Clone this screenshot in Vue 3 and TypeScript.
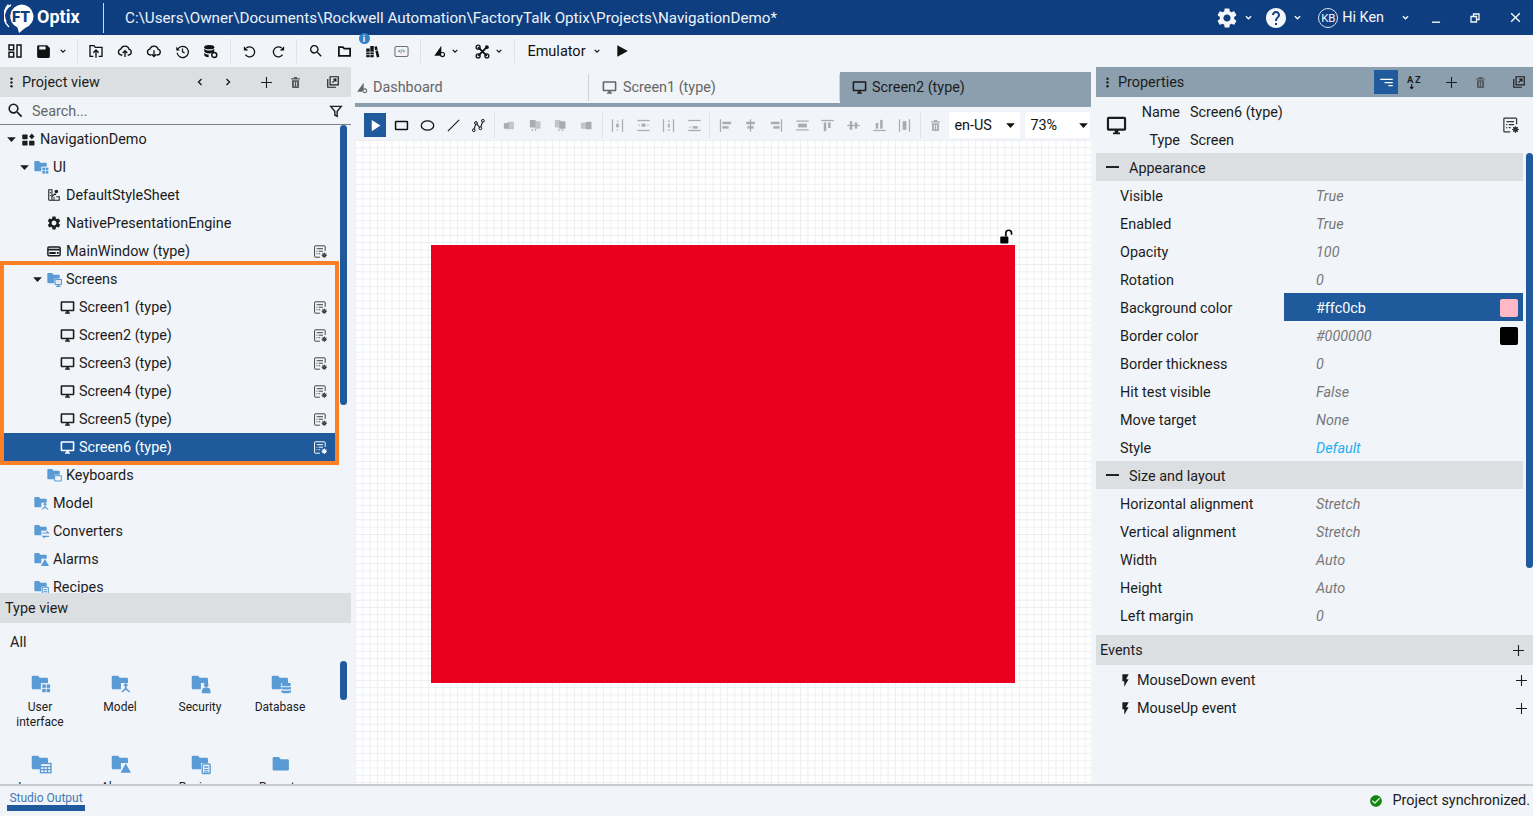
<script setup lang="ts">
import { h } from 'vue'

const folderD = 'M2 4.5C2 3.7 2.7 3 3.5 3H9l2.2 2.5H19c.9 0 1.6.7 1.6 1.6V17c0 .8-.7 1.5-1.6 1.5H3.5C2.7 18.5 2 17.8 2 17z'
const folderWith = (o: string) =>
  `<path fill="#5b9bd5" d="${folderD}"/><rect x="12.5" y="11.5" width="12" height="12.5" fill="#f1f4f8"/>${o}`
const B = '#5b9bd5'
const G = '#a9adb1'
const gl = (inner: string) => `<g fill="${G}" stroke="none">${inner}</g>`

const icons: Record<string, string> = {
  gear: '<path fill="currentColor" d="M19.14 12.94c.04-.3.06-.61.06-.94 0-.32-.02-.64-.07-.94l2.03-1.58a.49.49 0 0 0 .12-.61l-1.92-3.32a.488.488 0 0 0-.59-.22l-2.39.96c-.5-.38-1.03-.7-1.62-.94l-.36-2.54a.484.484 0 0 0-.48-.41h-3.84c-.24 0-.43.17-.47.41l-.36 2.54c-.59.24-1.13.57-1.62.94l-2.39-.96c-.22-.08-.47 0-.59.22L2.74 8.87c-.12.21-.08.47.12.61l2.03 1.58c-.05.3-.09.63-.09.94s.02.64.07.94l-2.03 1.58a.49.49 0 0 0-.12.61l1.92 3.32c.12.22.37.29.59.22l2.39-.96c.5.38 1.03.7 1.62.94l.36 2.54c.05.24.24.41.48.41h3.84c.24 0 .44-.17.47-.41l.36-2.54c.59-.24 1.13-.56 1.62-.94l2.39.96c.22.08.47 0 .59-.22l1.92-3.32c.12-.22.07-.47-.12-.61l-2.01-1.58zM12 15.6c-1.98 0-3.6-1.62-3.6-3.6s1.62-3.6 3.6-3.6 3.6 1.62 3.6 3.6-1.62 3.6-3.6 3.6z"/>',
  help: '<path fill="currentColor" d="M12 2C6.48 2 2 6.48 2 12s4.48 10 10 10 10-4.48 10-10S17.52 2 12 2zm1 17h-2v-2h2v2zm2.07-7.75l-.9.92C13.45 12.9 13 13.5 13 15h-2v-.5c0-1.1.45-2.1 1.17-2.83l1.24-1.26c.37-.36.59-.86.59-1.41 0-1.1-.9-2-2-2s-2 .9-2 2H8c0-2.21 1.79-4 4-4s4 1.79 4 4c0 .88-.36 1.68-.93 2.25z"/>',
  chev: '<path fill="none" stroke="currentColor" stroke-width="3.6" d="M5 8.5l7 7 7-7"/>',
  down: '<path fill="currentColor" d="M4 8h16l-8 8.5z"/>',
  min: '<path fill="currentColor" d="M5 18h14v2.4H5z"/>',
  restore: '<path fill="none" stroke="currentColor" stroke-width="2.6" d="M4 9h11v11H4zM9 9V4h11v11h-5"/>',
  close: '<path fill="none" stroke="currentColor" stroke-width="2.6" d="M4 4l16 16M20 4L4 20"/>',
  layout: '<path fill="none" stroke="currentColor" stroke-width="2.2" d="M3 3h7v7H3zM3 14h7v7H3zM15 3h6v18h-6z"/>',
  save: '<path fill="currentColor" d="M17 3H5a2 2 0 0 0-2 2v14a2 2 0 0 0 2 2h14a2 2 0 0 0 2-2V7l-4-4zm-2 6H6V5h9v4z"/>',
  open: '<path fill="none" stroke="currentColor" stroke-width="2" d="M8 20H3V4h6l2 2.5h10V20h-5"/><path fill="none" stroke="currentColor" stroke-width="2" d="M12 22V11M8 14.5l4-4 4 4"/>',
  cloudUp: '<path fill="none" stroke="currentColor" stroke-width="2" d="M8 18H6.5a4.5 4.5 0 0 1-.7-8.9A6.5 6.5 0 0 1 18.3 9.6 4.3 4.3 0 0 1 17.5 18H16"/><path fill="none" stroke="currentColor" stroke-width="2" d="M12 21v-9M8.5 15l3.5-3.500 3.500 3.500"/>',
  cloudDown: '<path fill="none" stroke="currentColor" stroke-width="2" d="M8 18H6.500a4.500 4.500 0 0 1-.7-8.900A6.500 6.500 0 0 1 18.300 9.600 4.300 4.300 0 0 1 17.500 18H16"/><path fill="none" stroke="currentColor" stroke-width="2" d="M12 11v9M8.500 17l3.500 3.500 3.500-3.500"/>',
  history: '<path fill="none" stroke="currentColor" stroke-width="2" d="M5 7.500A9 9 0 1 1 3.400 14M12 7v5.500l3.500 2"/><path fill="currentColor" d="M2 4.500v6h6z"/>',
  db: '<ellipse cx="10" cy="5" rx="8" ry="3.500" fill="currentColor"/><path fill="currentColor" d="M2 7.500c1.500 2 4.500 3 8 3s6.500-1 8-3V12c-1.500 2-4.500 3-8 3s-6.500-1-8-3zM2 14c1.500 2 4 3 7 3v4c-3.500 0-6-1-7-3z"/><circle cx="18" cy="17.500" r="4" fill="none" stroke="currentColor" stroke-width="2.400"/>',
  undo: '<path fill="none" stroke="currentColor" stroke-width="2" d="M7 6.500A8 8 0 1 1 5.500 17"/><path fill="currentColor" d="M3 3.500v7h7z"/>',
  redo: '<path fill="none" stroke="currentColor" stroke-width="2" d="M17 6.500A8 8 0 1 0 18.500 17"/><path fill="currentColor" d="M21 3.500v7h-7z"/>',
  search: '<path fill="currentColor" d="M15.500 14h-.79l-.28-.27A6.470 6.470 0 0 0 16 9.500 6.500 6.500 0 1 0 9.500 16c1.610 0 3.090-.59 4.230-1.570l.27.280v.79l5 4.990L20.490 19l-4.990-5zm-6 0C7.010 14 5 11.990 5 9.500S7.010 5 9.500 5 14 7.010 14 9.500 11.990 14 9.500 14z"/>',
  folderO: '<path fill="none" stroke="currentColor" stroke-width="2.800" d="M3 5h6.500l2 2.500H21V19H3z"/>',
  library: '<path fill="currentColor" d="M2 7h5.500v14H2zM8.500 3h5.500v18H8.500zM15 4.500l4-1 4 17-4 1z"/><path stroke="#f1f4f8" stroke-width="1.200" d="M2 13h12M2 17h12M16 10.500l5-1"/>',
  code: '<rect x="1.500" y="4" width="21" height="16" rx="2.500" fill="none" stroke="#6f7377" stroke-width="1.700"/><text x="12" y="15" font-size="8" font-weight="700" font-family="Roboto" text-anchor="middle" fill="#555">&lt;/&gt;</text>',
  dash: '<path fill="currentColor" d="M16 3L4 20h9.500a6 6 0 0 1 2.500-5z"/><circle cx="18" cy="18" r="3.500" fill="none" stroke="currentColor" stroke-width="2"/>',
  tools: '<path fill="none" stroke="currentColor" stroke-width="3" d="M5 5l14 14M19 5L5 19"/><circle cx="5" cy="5" r="3.200" fill="none" stroke="currentColor" stroke-width="2"/><circle cx="19" cy="5" r="3" fill="currentColor"/><circle cx="5" cy="19" r="3.200" fill="none" stroke="currentColor" stroke-width="2"/><circle cx="19" cy="19" r="3.200" fill="none" stroke="currentColor" stroke-width="2"/>',
  play: '<path fill="currentColor" d="M4 2v20L22 12z"/>',
  dots: '<circle cx="12" cy="5" r="2.200" fill="currentColor"/><circle cx="12" cy="12" r="2.200" fill="currentColor"/><circle cx="12" cy="19" r="2.200" fill="currentColor"/>',
  left: '<path fill="none" stroke="currentColor" stroke-width="2.800" d="M15 6l-6 6 6 6"/>',
  right: '<path fill="none" stroke="currentColor" stroke-width="2.800" d="M9 6l6 6-6 6"/>',
  plus: '<path fill="none" stroke="currentColor" stroke-width="2" d="M12 2v20M2 12h20"/>',
  trash: '<path fill="currentColor" d="M9 2h6v2h5v2.500H4V4h5zM5.500 8h13v12.500a1.500 1.500 0 0 1-1.500 1.500H7a1.500 1.500 0 0 1-1.500-1.500zM9 10.500v9h1.700v-9zm4.300 0v9H15v-9z"/>',
  popout: '<path fill="none" stroke="currentColor" stroke-width="2" d="M7 3h14v14H7zM3 7v14h14"/><path fill="none" stroke="currentColor" stroke-width="2" d="M11 13l6-6M12.500 7H17v4.500"/>',
  funnel: '<path fill="none" stroke="currentColor" stroke-width="2.400" d="M3 4h18l-7 8.500V21l-4-2v-6.500z"/>',
  monitor: '<path fill="currentColor" d="M21 2H3c-1.100 0-2 .9-2 2v12c0 1.100.9 2 2 2h7v2H8v2h8v-2h-2v-2h7c1.100 0 2-.9 2-2V4c0-1.100-.9-2-2-2zm-.5 13.500h-17v-11h17v11z"/>',
  typeBadge: '<path fill="none" stroke="currentColor" stroke-width="1.600" d="M19.500 11V3.800c0-.5-.4-.9-.9-.9H3.400c-.5 0-.9.4-.9.9v16.400c0 .5.4.9.9.9H11"/><path fill="none" stroke="currentColor" stroke-width="1.600" d="M6 7.500h10M9 11.500h7M9 15.500h2.500M5.500 11.500h1.500M5.500 15.500h1.500"/><circle cx="18" cy="18" r="2.200" fill="none" stroke="currentColor" stroke-width="2"/><path stroke="currentColor" stroke-width="1.500" d="M18 13.500v9M13.500 18h9M15 15l6 6M21 15l-6 6"/>',
  grid: '<rect x="2" y="4" width="8.500" height="7.500" rx="1" fill="currentColor"/><rect x="2" y="14" width="8.500" height="7.500" rx="1" fill="currentColor"/><rect x="13" y="14" width="8.500" height="7.500" rx="1" fill="currentColor"/><path fill="currentColor" d="M17.300 2.500l4.300 4.500-4.300 4.500L13 7z"/>',
  tri: '<path fill="currentColor" d="M4 8h16l-8 8.500z"/>',
  style: '<path fill="none" stroke="currentColor" stroke-width="1.800" d="M3 21V3h5.500v18M3 21h18v-6h-5M8.500 15l5-5 1.800 1.800"/><circle cx="5.700" cy="8" r="1.200" fill="currentColor"/><circle cx="5.700" cy="13" r="1.200" fill="currentColor"/><circle cx="16" cy="6" r="3" fill="currentColor"/><path fill="none" stroke="currentColor" stroke-width="1.500" d="M12 21v-6"/>',
  window: '<rect x="1.500" y="5" width="21" height="15" rx="2" fill="none" stroke="currentColor" stroke-width="2.500"/><path fill="currentColor" d="M2 8h20v3H2zM4 13.500h11V17H4zM17 13.500h3V17h-3z"/>',
  bolt: '<path fill="currentColor" d="M7 2v11h3v9l7-12h-4l4-8z"/>',
  check: '<path fill="currentColor" d="M12 2C6.480 2 2 6.480 2 12s4.480 10 10 10 10-4.480 10-10S17.520 2 12 2zm-2 15l-5-5 1.410-1.410L10 14.170l7.590-7.590L19 8l-9 9z"/>',
  lock: '<rect x="2" y="12" width="13" height="11" rx="1.500" fill="currentColor"/><path fill="none" stroke="currentColor" stroke-width="2.600" d="M11 12V6.500a4.500 4.500 0 0 1 9 0V9"/>',
  rect: '<rect x="2.500" y="5.500" width="19" height="13" rx="1" fill="none" stroke="currentColor" stroke-width="2.400"/>',
  ellipse: '<ellipse cx="12" cy="12" rx="10" ry="7.500" fill="none" stroke="currentColor" stroke-width="2"/>',
  line: '<path stroke="currentColor" stroke-width="1.800" d="M3 21L21 3"/>',
  poly: '<path fill="none" stroke="currentColor" stroke-width="1.700" d="M4.500 19.500L8 8l7 8.500 4-12"/><circle cx="4.500" cy="19.500" r="2.200" fill="#f1f4f8" stroke="currentColor" stroke-width="1.600"/><circle cx="8" cy="8" r="2.200" fill="#f1f4f8" stroke="currentColor" stroke-width="1.600"/><circle cx="15" cy="16.500" r="2.200" fill="#f1f4f8" stroke="currentColor" stroke-width="1.600"/><circle cx="19" cy="4.500" r="2.200" fill="#f1f4f8" stroke="currentColor" stroke-width="1.600"/>',
  arrowSel: '<path fill="#fff" d="M6 3v18l14-9z"/>',
  tier: '<path fill="#fff" d="M2 6h20v2H2zM9 11h13v2H9zM15 16h7v2h-7z"/>',
  az: '<text x="0" y="13" font-size="14" font-weight="700" font-family="Roboto" fill="currentColor">A</text><text x="12" y="13" font-size="14" font-weight="700" font-family="Roboto" fill="currentColor">Z</text><path fill="none" stroke="currentColor" stroke-width="1.700" d="M7 15v7M4.500 19.500L7 22l2.500-2.500"/>',
  ord1: gl('<rect x="3" y="8" width="8" height="9" rx="1"/><rect x="9" y="6" width="10" height="12" rx="1" opacity=".65"/>'),
  ord2: gl('<rect x="3" y="3" width="9" height="12" rx="1"/><rect x="10" y="5" width="10" height="12" rx="1" opacity=".65"/><path d="M5 19l3-2v4zM10 19l3-2v4z"/>'),
  ord3: gl('<rect x="3" y="3" width="9" height="12" rx="1" opacity=".65"/><rect x="10" y="5" width="10" height="12" rx="1"/><path d="M17 19l-3-2v4zM12 19l-3-2v4z"/>'),
  ord4: gl('<rect x="3" y="7" width="10" height="10" rx="1" opacity=".65"/><rect x="11" y="6" width="9" height="12" rx="1"/>'),
  dist1: gl('<rect x="3" y="2" width="2" height="20"/><rect x="19" y="2" width="2" height="20"/><rect x="10" y="9" width="4" height="6"/><rect x="11" y="4" width="2" height="2"/><rect x="11" y="18" width="2" height="2"/>'),
  dist2: gl('<rect x="2" y="3" width="20" height="2"/><rect x="2" y="19" width="20" height="2"/><rect x="9" y="9" width="6" height="5"/><rect x="4" y="10.500" width="2" height="2"/><rect x="18" y="10.500" width="2" height="2"/>'),
  dist3: gl('<rect x="3" y="2" width="2" height="20"/><rect x="19" y="2" width="2" height="20"/><rect x="11" y="9" width="3" height="6"/><rect x="11" y="4" width="3" height="2"/><rect x="11" y="18" width="3" height="2"/>'),
  dist4: gl('<rect x="2" y="3" width="20" height="2"/><rect x="2" y="19" width="20" height="2"/><rect x="9" y="13" width="8" height="4"/><rect x="4" y="14" width="2" height="2"/>'),
  al1: gl('<rect x="3" y="2" width="2" height="20"/><rect x="7" y="6" width="14" height="4"/><rect x="7" y="13" width="10" height="4"/>'),
  al2: gl('<rect x="11" y="2" width="2" height="20"/><rect x="5" y="6" width="14" height="4"/><rect x="7" y="13" width="10" height="4"/>'),
  al3: gl('<rect x="19" y="2" width="2" height="20"/><rect x="3" y="6" width="14" height="4"/><rect x="7" y="13" width="10" height="4"/>'),
  al4: gl('<rect x="2" y="4" width="20" height="2"/><rect x="2" y="18" width="20" height="2"/><rect x="5" y="9" width="14" height="6"/>'),
  al5: gl('<rect x="2" y="3" width="20" height="2"/><rect x="6" y="7" width="4" height="14"/><rect x="13" y="7" width="4" height="9"/>'),
  al6: gl('<rect x="2" y="11" width="20" height="2"/><rect x="6" y="5" width="4" height="14"/><rect x="14" y="7" width="4" height="10"/>'),
  al7: gl('<rect x="2" y="19" width="20" height="2"/><rect x="6" y="8" width="4" height="9"/><rect x="13" y="3" width="4" height="14"/>'),
  al8: gl('<rect x="3" y="2" width="2" height="20"/><rect x="19" y="2" width="2" height="20"/><rect x="9" y="5" width="6" height="14"/>'),
  fUI: folderWith(`<rect x="14" y="13" width="4" height="4" fill="${B}"/><rect x="19" y="13" width="4" height="4" fill="${B}"/><rect x="14" y="18" width="4" height="4" fill="${B}"/><rect x="19" y="18" width="4" height="4" fill="${B}"/>`),
  fScreens: folderWith(`<path fill="${B}" d="M13 12h11v9h-4v1.500h2V24h-7v-1.500h2V21h-4z"/><rect x="14.500" y="13.500" width="8" height="6" fill="#dfe9f4"/>`),
  fKeyboards: folderWith(`<path fill="none" stroke="${B}" stroke-width="1.500" d="M13 13h10v8H13z"/>`),
  fModel: folderWith(`<path fill="${B}" d="M18 11l3 3.500h-2v3l4 3.500-1 1.200-4-3.200-4 3.200-1-1.200 4-3.500v-3h-2z"/>`),
  fConv: folderWith(`<path fill="none" stroke="${B}" stroke-width="1.800" d="M14 15h9l-2.500-2.500M24 20h-9l2.500 2.500"/>`),
  fAlarm: folderWith(`<path fill="${B}" d="M18 12l6 10.500H12z"/>`),
  fRecipes: folderWith(`<rect x="14" y="12.500" width="9" height="11" rx="1" fill="none" stroke="${B}" stroke-width="1.600"/><path stroke="${B}" stroke-width="1.500" d="M16 16h5M16 19h5M16 21.500h5"/>`),
  fSecurity: folderWith(`<circle cx="18.500" cy="13.500" r="2.700" fill="${B}"/><path fill="${B}" d="M13.500 23c0-5.500 1.500-6.500 5-6.500s5 1 5 6.500z"/>`),
  fDb: folderWith(`<ellipse cx="18.500" cy="13" rx="5.500" ry="2.200" fill="${B}"/><path fill="${B}" d="M13 15.300c1.500 1.400 9.500 1.400 11 0v2.600c-1.500 1.400-9.500 1.400-11 0zM13 19.300c1.500 1.400 9.500 1.400 11 0v2.700c-1.500 1.700-9.500 1.700-11 0z"/>`),
  fTable: folderWith(`<rect x="12" y="12" width="12" height="10.500" fill="none" stroke="${B}" stroke-width="1.500"/><path stroke="${B}" stroke-width="1.300" d="M12 15.500h12M12 19h12M16 15.500v7M20 15.500v7"/>`),
  fPlain: `<path fill="${B}" d="${folderD}" transform="translate(1 1.500)"/>`,
}

const Ic = (props: { n: string; s?: number }) =>
  h('svg', {
    viewBox: '0 0 24 24',
    width: props.s ?? 16,
    height: props.s ?? 16,
    innerHTML: icons[props.n],
    style: 'display:block;flex:none;overflow:visible',
  })
Ic.props = ['n', 's']

interface Row { l: number; arrow?: boolean; icon: string; label: string; badge?: boolean; sel?: boolean; size?: number }
const treeTop: Row[] = [
  { l: 0, arrow: true, icon: 'grid', label: 'NavigationDemo', size: 15 },
  { l: 1, arrow: true, icon: 'fUI', label: 'UI', size: 16 },
  { l: 2, icon: 'style', label: 'DefaultStyleSheet', size: 14 },
  { l: 2, icon: 'gear', label: 'NativePresentationEngine', size: 16 },
  { l: 2, icon: 'window', label: 'MainWindow (type)', badge: true, size: 14 },
]
const treeGroup: Row[] = [
  { l: 2, arrow: true, icon: 'fScreens', label: 'Screens', size: 16 },
  ...[1, 2, 3, 4, 5].map((i) => ({ l: 3, icon: 'monitor', label: `Screen${i} (type)`, badge: true, size: 15 })),
  { l: 3, icon: 'monitor', label: 'Screen6 (type)', badge: true, sel: true, size: 15 },
]
const treeRest: Row[] = [
  { l: 2, icon: 'fKeyboards', label: 'Keyboards', size: 16 },
  { l: 1, icon: 'fModel', label: 'Model', size: 16 },
  { l: 1, icon: 'fConv', label: 'Converters', size: 16 },
  { l: 1, icon: 'fAlarm', label: 'Alarms', size: 16 },
  { l: 1, icon: 'fRecipes', label: 'Recipes', size: 16 },
]
const types = [
  { icon: 'fUI', label: 'User interface' },
  { icon: 'fModel', label: 'Model' },
  { icon: 'fSecurity', label: 'Security' },
  { icon: 'fDb', label: 'Database' },
  { icon: 'fTable', label: 'Loggers' },
  { icon: 'fAlarm', label: 'Alarms' },
  { icon: 'fRecipes', label: 'Recipes' },
  { icon: 'fPlain', label: 'Reports' },
]
const appearance = [
  { k: 'Visible', v: 'True' },
  { k: 'Enabled', v: 'True' },
  { k: 'Opacity', v: '100' },
  { k: 'Rotation', v: '0' },
  { k: 'Background color', v: '#ffc0cb', sel: true, sw: '#ffb9c6' },
  { k: 'Border color', v: '#000000', sw: '#000' },
  { k: 'Border thickness', v: '0' },
  { k: 'Hit test visible', v: 'False' },
  { k: 'Move target', v: 'None' },
  { k: 'Style', v: 'Default', link: true },
]
const sizeLayout = [
  { k: 'Horizontal alignment', v: 'Stretch' },
  { k: 'Vertical alignment', v: 'Stretch' },
  { k: 'Width', v: 'Auto' },
  { k: 'Height', v: 'Auto' },
  { k: 'Left margin', v: '0' },
]
const drawGroups = [
  ['ord1', 'ord2', 'ord3', 'ord4'],
  ['dist1', 'dist2', 'dist3', 'dist4'],
  ['al1', 'al2', 'al3', 'al4', 'al5', 'al6', 'al7', 'al8'],
]
</script>

<template>
  <div class="app">
    <header class="title">
      <div class="logo">
        <svg width="30" height="32" viewBox="0 0 30 32">
          <path fill="none" stroke="#fff" stroke-width="1.500" d="M7 3A13.500 13.500 0 0 0 5 25"/>
          <path fill="none" stroke="#fff" stroke-width="1.500" d="M4.500 2.500A15 15 0 0 0 2 20"/>
          <path fill="#fff" d="M17.500 2.500a12 12 0 0 1 4 23.300L15 31l-1.500-5.500A12 12 0 0 1 17.500 2.500z"/>
          <text x="17" y="19.500" font-size="15" font-weight="900" font-family="Roboto" text-anchor="middle" fill="#0e3e80">FT</text>
        </svg>
        <span class="optix">Optix</span>
      </div>
      <div class="title-sep"></div>
      <div class="path">C:\Users\Owner\Documents\Rockwell Automation\FactoryTalk Optix\Projects\NavigationDemo*</div>
      <div class="title-right">
        <Ic n="gear" :s="24" />
        <span class="t-chev1"><Ic n="chev" :s="9" /></span>
        <span class="t-help"><Ic n="help" :s="24" /></span>
        <span class="t-chev1"><Ic n="chev" :s="9" /></span>
        <span class="kb">KB</span>
        <span class="hi">Hi Ken</span>
        <span class="t-chev2"><Ic n="chev" :s="9" /></span>
        <span class="t-min"><Ic n="min" :s="14" /></span>
        <span class="t-res"><Ic n="restore" :s="12" /></span>
        <span class="t-close"><Ic n="close" :s="13" /></span>
      </div>
    </header>

    <div class="toolbar">
      <span class="tb"><Ic n="layout" /></span>
      <span class="tb"><Ic n="save" :s="17" /></span>
      <span class="tchev"><Ic n="chev" :s="8" /></span>
      <span class="tsep s1"></span>
      <span class="tb"><Ic n="open" /></span>
      <span class="tb"><Ic n="cloudUp" /></span>
      <span class="tb"><Ic n="cloudDown" /></span>
      <span class="tb"><Ic n="history" :s="15" /></span>
      <span class="tb"><Ic n="db" :s="15" /></span>
      <span class="tsep s2"></span>
      <span class="tb"><Ic n="undo" :s="15" /></span>
      <span class="tb"><Ic n="redo" :s="15" /></span>
      <span class="tsep s3"></span>
      <span class="tb"><Ic n="search" :s="16" /></span>
      <span class="tb"><Ic n="folderO" :s="15" /></span>
      <span class="tb lib">
        <Ic n="library" :s="15" />
        <span class="info">i</span>
      </span>
      <span class="tb"><Ic n="code" :s="15" /></span>
      <span class="tsep s4"></span>
      <span class="tb"><Ic n="dash" :s="14" /></span>
      <span class="tchev c2"><Ic n="chev" :s="8" /></span>
      <span class="tb t-tools"><Ic n="tools" :s="15" /></span>
      <span class="tchev c3"><Ic n="chev" :s="8" /></span>
      <span class="tsep s5"></span>
      <span class="emu">Emulator</span>
      <span class="tchev c4"><Ic n="chev" :s="8" /></span>
      <span class="playb"><Ic n="play" :s="14" /></span>
    </div>

    <main class="main">
      <aside class="left">
        <div class="phead">
          <span class="dots"><Ic n="dots" :s="13" /></span>
          <span class="ptitle">Project view</span>
          <span class="hbtns">
            <Ic n="left" :s="12" />
            <span class="gl"><Ic n="right" :s="12" /></span>
            <span class="gp"><Ic n="plus" :s="13" /></span>
            <span class="gs trash"><Ic n="trash" :s="13" /></span>
            <span class="gl2"><Ic n="popout" :s="14" /></span>
          </span>
        </div>
        <div class="searchbar">
          <Ic n="search" :s="19" />
          <span class="stext">Search...</span>
          <span class="fun"><Ic n="funnel" :s="14" /></span>
        </div>
        <div class="tree">
          <div class="tscroll"></div>
          <div v-for="r in treeTop" :key="r.label" class="row" :style="{ paddingLeft: r.l * 13 + 'px' }">
            <span class="arrow"><Ic v-if="r.arrow" n="tri" :s="13" /></span>
            <span class="ricon"><Ic :n="r.icon" :s="r.size" /></span>
            <span class="rlabel">{{ r.label }}</span>
            <span v-if="r.badge" class="rbadge"><Ic n="typeBadge" :s="15" /></span>
          </div>
          <div class="group">
            <div v-for="r in treeGroup" :key="r.label" class="row" :class="{ sel: r.sel }" :style="{ paddingLeft: r.l * 13 + 'px' }">
              <span class="arrow"><Ic v-if="r.arrow" n="tri" :s="13" /></span>
              <span class="ricon"><Ic :n="r.icon" :s="r.size" /></span>
              <span class="rlabel">{{ r.label }}</span>
              <span v-if="r.badge" class="rbadge"><Ic n="typeBadge" :s="15" /></span>
            </div>
          </div>
          <div v-for="r in treeRest" :key="r.label" class="row" :style="{ paddingLeft: r.l * 13 + 'px' }">
            <span class="arrow"></span>
            <span class="ricon"><Ic :n="r.icon" :s="r.size" /></span>
            <span class="rlabel">{{ r.label }}</span>
          </div>
        </div>
        <div class="thead">Type view</div>
        <div class="types">
          <div class="tscroll2"></div>
          <div class="all">All</div>
          <div class="tgrid">
            <div v-for="t in types" :key="t.label" class="tcell">
              <Ic :n="t.icon" :s="21" />
              <div class="tlabel">{{ t.label }}</div>
            </div>
          </div>
        </div>
      </aside>

      <section class="center">
        <div class="tabs">
          <div class="tab t1"><Ic n="dash" :s="13" /><span>Dashboard</span></div>
          <div class="tab t2"><Ic n="monitor" :s="15" /><span>Screen1 (type)</span></div>
          <div class="tab t3"><Ic n="monitor" :s="15" /><span>Screen2 (type)</span></div>
        </div>
        <div class="draw">
          <span class="sel-btn"><Ic n="arrowSel" :s="15" /></span>
          <span class="db"><Ic n="rect" :s="15" /></span>
          <span class="db"><Ic n="ellipse" :s="15" /></span>
          <span class="db"><Ic n="line" :s="15" /></span>
          <span class="db"><Ic n="poly" :s="15" /></span>
          <template v-for="(g, i) in drawGroups" :key="i">
            <span class="dsep"></span>
            <span v-for="n in g" :key="n" class="db"><Ic :n="n" :s="15" /></span>
          </template>
          <span class="dsep"></span>
          <span class="db trashg"><Ic n="trash" :s="13" /></span>
          <div class="combo c-lang"><span>en-US</span><Ic n="down" :s="13" /></div>
          <div class="combo c-zoom"><span>73%</span><Ic n="down" :s="13" /></div>
        </div>
        <div class="canvas">
          <div class="board">
            <span class="lock"><Ic n="lock" :s="15" /></span>
          </div>
        </div>
      </section>

      <aside class="right">
        <div class="phead blue">
          <span class="dots"><Ic n="dots" :s="13" /></span>
          <span class="ptitle">Properties</span>
          <span class="hbtns">
            <span class="hsel"><Ic n="tier" :s="15" /></span>
            <span class="g9"><Ic n="az" :s="16" /></span>
            <span class="gl3"><Ic n="plus" :s="13" /></span>
            <span class="gs3 trash"><Ic n="trash" :s="13" /></span>
            <span class="gl4"><Ic n="popout" :s="14" /></span>
          </span>
        </div>
        <div class="identity">
          <Ic n="monitor" :s="21" />
          <div class="idgrid">
            <span class="idk">Name</span><span>Screen6 (type)</span>
            <span class="idk">Type</span><span>Screen</span>
          </div>
          <span class="idbadge"><Ic n="typeBadge" :s="18" /></span>
        </div>
        <div class="props">
          <div class="pscroll"></div>
          <div class="sect"><span class="dash"></span>Appearance</div>
          <div v-for="p in appearance" :key="p.k" class="prow">
            <span class="pk">{{ p.k }}</span>
            <span class="pv" :class="{ psel: p.sel, link: p.link }">
              <span>{{ p.v }}</span>
              <i v-if="p.sw" class="sw" :style="{ background: p.sw }"></i>
            </span>
          </div>
          <div class="sect"><span class="dash"></span>Size and layout</div>
          <div v-for="p in sizeLayout" :key="p.k" class="prow">
            <span class="pk">{{ p.k }}</span>
            <span class="pv"><span>{{ p.v }}</span></span>
          </div>
        </div>
        <div class="events-h"><span>Events</span><Ic n="plus" :s="13" /></div>
        <div class="ev"><Ic n="bolt" :s="15" /><span class="evt">MouseDown event</span><span class="evp"><Ic n="plus" :s="13" /></span></div>
        <div class="ev"><Ic n="bolt" :s="15" /><span class="evt">MouseUp event</span><span class="evp"><Ic n="plus" :s="13" /></span></div>
      </aside>
    </main>

    <footer class="status">
      <div class="output">Studio Output</div>
      <div class="sync"><span class="okc"><Ic n="check" :s="14" /></span><span>Project synchronized.</span></div>
    </footer>
  </div>
</template>

<style>
html, body { margin: 0; background: #f1f4f8; overflow: hidden; }
</style>

<style scoped>
.app { width: 1533px; height: 816px; display: flex; flex-direction: column; background: #f1f4f8; color: #1c1c1c; font-family: Roboto, "Liberation Sans", sans-serif; font-size: 14.4px; overflow: hidden; }

.title { height: 35px; flex: none; display: flex; align-items: center; background: #0e3e80; color: #f4f6f9; box-sizing: border-box; }
.logo { width: 103px; display: flex; align-items: center; padding-left: 4px; box-sizing: border-box; flex: none; }
.optix { font-weight: 700; font-size: 18px; color: #fff; margin-left: 3px; margin-top: -3px; }
.title-sep { width: 1px; height: 30px; background: #cfd8e6; flex: none; }
.path { margin-left: 21px; font-size: 15.2px; white-space: nowrap; color: #eef2f7; }
.title-right { margin-left: auto; display: flex; align-items: center; padding-right: 11px; }
.t-chev1 { margin-left: 5px; }
.t-help { margin-left: 11px; }
.kb { margin-left: 16px; width: 18px; height: 18px; border: 1px solid #dfe6f0; border-radius: 50%; font-size: 11.5px; display: flex; align-items: center; justify-content: center; letter-spacing: -.3px; }
.hi { margin-left: 4px; font-size: 14.4px; }
.t-chev2 { margin-left: 17px; }
.t-min { margin-left: 19px; }
.t-res { margin-left: 26px; }
.t-close { margin-left: 28px; }

.toolbar { height: 32px; flex: none; display: flex; align-items: center; padding-left: 1px; box-sizing: border-box; background: #f1f4f8; color: #111; }
.tb { width: 28.6px; height: 24px; flex: none; display: flex; align-items: center; justify-content: center; position: relative; }
.tchev { width: 9px; display: flex; justify-content: center; flex: none; }
.tsep { width: 1px; height: 24px; background: #dfe3e7; flex: none; }
.s1 { margin: 0 4.500px 0 9.500px; }
.s2 { margin: 0 4px 0 5px; }
.s3 { margin: 0 4px 0 4px; }
.s4 { margin: 0 3.500px 0 4px; }
.s5 { margin: 0 12px 0 11px; }
.c2 { margin-left: -2px; }
.t-tools { margin-left: 8px; }
.c3 { margin-left: -2px; }
.emu { font-size: 14.5px; flex: none; }
.c4 { margin-left: 7px; }
.playb { margin-left: 13px; }
.info { position: absolute; left: 0; top: -6px; width: 11px; height: 11px; border-radius: 50%; background: #2f80c6; color: #fff; font-size: 9px; font-weight: 700; display: flex; align-items: center; justify-content: center; }

.main { flex: 1; min-height: 0; display: flex; }
.left { width: 351px; flex: none; display: flex; flex-direction: column; }
.phead { height: 30px; flex: none; display: flex; align-items: center; background: #dcdfe2; box-sizing: border-box; padding-right: 11px; color: #1c1c1c; }
.phead.blue { background: #8c9fae; padding-right: 7px; }
.dots { margin-left: 5px; width: 13px; }
.ptitle { margin-left: 4px; }
.hbtns { margin-left: auto; display: flex; align-items: center; }
.gl { margin-left: 16px; }
.gp { margin-left: 26px; }
.gs { margin-left: 16px; }
.gl2 { margin-left: 24px; }
.trash { color: #55595d; }
.searchbar { height: 28px; flex: none; display: flex; align-items: center; border-bottom: 1.500px solid #7c8084; box-sizing: border-box; padding: 0 8px 0 6px; }
.stext { margin-left: 7px; margin-top: 2px; color: #666; }
.fun { margin-left: auto; }
.tree { height: 468px; flex: none; overflow: hidden; position: relative; padding: 0 16px 0 4px; box-sizing: border-box; width: 351px; }
.tscroll { position: absolute; left: 340px; top: 0; width: 7px; height: 280px; border-radius: 4px; background: #1f5a9c; }
.row { height: 28px; display: flex; align-items: center; box-sizing: border-box; }
.arrow { width: 14px; flex: none; display: flex; justify-content: center; }
.ricon { width: 20px; flex: none; display: flex; justify-content: center; }
.rlabel { margin-left: 2px; white-space: nowrap; }
.rbadge { margin-left: auto; margin-right: 7px; color: #444; }
.group { outline: 4px solid #ff7f27; }
.row.sel { background: #1f5a9c; color: #fff; }
.row.sel .rbadge { color: #fff; }
.thead { height: 30px; flex: none; display: flex; align-items: center; padding-left: 5px; background: #dcdfe2; }
.types { flex: 1; min-height: 0; overflow: hidden; position: relative; }
.tscroll2 { position: absolute; left: 340px; top: 38px; width: 7px; height: 39px; border-radius: 4px; background: #1f5a9c; }
.all { height: 38px; display: flex; align-items: center; padding-left: 10px; }
.tgrid { display: grid; grid-template-columns: repeat(4, 80px); grid-auto-rows: 80px; padding-top: 12px; }
.tcell { display: flex; flex-direction: column; align-items: center; }
.tlabel { margin-top: 6px; font-size: 12px; line-height: 15px; text-align: center; width: 70px; }

.center { width: 736px; margin-left: 4px; flex: none; display: flex; flex-direction: column; padding-top: 5px; box-sizing: border-box; }
.tabs { height: 31px; flex: none; display: flex; border-bottom: 4px solid #8c9fae; box-sizing: content-box; }
.tab { display: flex; align-items: center; color: #666; position: relative; box-sizing: border-box; }
.tab span { margin-left: 6px; }
.t1 { width: 234px; border-right: 1px solid #cfd3d7; padding-left: 0; height: 27px; margin-top: 2px; }
.t1 span { margin-left: 5px; }
.t2 { width: 251px; padding-left: 13px; border-right: 1px solid #cfd3d7; height: 27px; margin-top: 2px; }
.t3 { flex: 1; padding-left: 12px; background: #8c9fae; color: #1c1c1c; margin-left: 0; }
.t3 span { margin-left: 5px; }
.draw { height: 33px; flex: none; display: flex; align-items: center; padding: 3px 0 0 9px; box-sizing: border-box; color: #111; }
.sel-btn { width: 22px; height: 24px; background: #1f5a9c; display: flex; align-items: center; justify-content: center; flex: none; margin-right: 3px; }
.db { width: 25.700px; height: 24px; display: flex; align-items: center; justify-content: center; flex: none; }
.dsep { width: 1px; height: 25px; background: #dfe3e7; flex: none; margin: 0 2px; }
.trashg { color: #a9adb1; }
.combo { height: 26px; background: #fff; border-radius: 2px; display: flex; align-items: center; justify-content: space-between; box-sizing: border-box; padding: 0 3px 0 5px; flex: none; font-size: 14.400px; }
.c-lang { width: 71px; margin-left: 1px; }
.c-zoom { width: 65px; margin-left: 5px; padding-right: 0; }
.canvas { flex: 1; min-height: 0; padding: 105px 76px 0; box-sizing: border-box; background-color: #fff; background-image: linear-gradient(#eceef0 1px, transparent 1px), linear-gradient(90deg, #eceef0 1px, transparent 1px); background-size: 7.300px 7.300px; }
.board { width: 584px; height: 438px; background: #ea001e; position: relative; }
.lock { position: absolute; right: 1px; top: -16px; color: #000; }

.right { flex: 1; margin-left: 5px; display: flex; flex-direction: column; min-width: 0; position: relative; }
.hsel { width: 24px; height: 24px; background: #1f5a9c; display: flex; align-items: center; justify-content: center; }
.g9 { margin-left: 9px; }
.gl3 { margin-left: 22px; }
.gs3 { margin-left: 16px; }
.gl4 { margin-left: 25px; }
.identity { height: 56px; flex: none; display: flex; align-items: center; padding-left: 10px; box-sizing: border-box; }
.idgrid { display: grid; grid-template-columns: 53px auto; column-gap: 10px; grid-auto-rows: 28px; align-items: center; margin-top: 2px; }
.idk { text-align: right; }
.idbadge { margin-left: auto; margin-right: 13px; color: #333; }
.props { height: 482px; flex: none; position: relative; padding-right: 10px; overflow: hidden; }
.pscroll { position: absolute; right: 0; top: 0; width: 7px; height: 415px; border-radius: 4px; background: #1f5a9c; }
.sect { height: 28px; display: flex; align-items: center; background: #dcdfe2; padding: 2px 0 0 10px; box-sizing: border-box; }
.dash { width: 13px; height: 1.600px; background: #222; margin: -2px 10px 0 0; }
.prow { height: 28px; display: flex; align-items: center; padding-left: 24px; }
.pk { width: 164px; flex: none; padding-top: 2px; }
.pv { flex: 1; align-self: stretch; display: flex; align-items: center; justify-content: space-between; padding: 2px 5px 0 32px; font-style: italic; color: #787878; box-sizing: border-box; }
.psel { background: #1f5a9c; color: #fff; font-style: normal; }
.link { color: #1fb0ef; }
.sw { width: 18px; height: 18px; border-radius: 2px; display: block; }
.events-h { height: 30px; flex: none; display: flex; align-items: center; justify-content: space-between; background: #dcdfe2; padding: 0 8px 0 4px; margin-bottom: 1px; }
.ev { height: 28px; flex: none; display: flex; align-items: center; padding-left: 22px; }
.evt { margin-left: 4px; }
.evp { margin-left: auto; margin-right: 5px; }

.status { height: 32px; flex: none; display: flex; align-items: flex-start; justify-content: space-between; box-sizing: border-box; border-top: 2.500px solid #c9cccf; background: #f1f4f8; }
.output { margin-left: 7px; margin-top: 5px; width: 78px; font-size: 12px; line-height: 15px; text-align: center; color: #3f78b4; border-bottom: 6px solid #1f5a9c; height: 14px; box-sizing: content-box; }
.sync { display: flex; align-items: center; gap: 9px; height: 29px; padding-right: 3px; }
.okc { color: #12860e; }
</style>
